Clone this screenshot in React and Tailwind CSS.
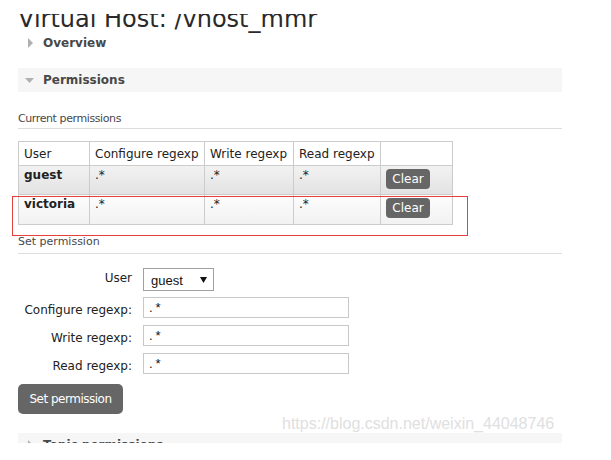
export default function App() {
  const rows = [
    { user: "guest", bg: "bg-gradient-to-b from-[#f2f2f2] to-[#e2e2e2]", h: "h-[29px]" },
    { user: "victoria", bg: "bg-gradient-to-b from-[#fdfdfd] to-[#f1f1f1]", h: "h-[30px]" },
  ];
  const fields = ["Configure regexp:", "Write regexp:", "Read regexp:"];
  return (
    <div className="relative w-[611px] h-[460px] overflow-hidden bg-white font-['DejaVu_Sans',Verdana,sans-serif] text-[#333]">
      <div className="px-[18px] w-[580px]">
        <div className="pt-[14px]">
          <div className="h-[20px] overflow-hidden">
            <h1 className="-mt-[9px] text-[24px] leading-[28px] font-normal text-[#2a2a2a] whitespace-nowrap">
              Virtual Host: /vhost_mmr
            </h1>
          </div>
        </div>

        <div className="-mt-[3px] flex items-center h-[24px]">
          <svg width="5" height="10" viewBox="0 0 5 10" className="ml-[10px]">
            <path d="M0 0 L5 5 L0 10 Z" fill="#b0b0b0" />
          </svg>
          <span className="ml-[10px] text-[12px] font-bold text-[#484848]">Overview</span>
        </div>

        <div className="mt-[13px] flex items-center h-[24px] bg-[#f6f6f6]">
          <svg width="9" height="5" viewBox="0 0 9 5" className="ml-[7px]">
            <path d="M0 0 L9 0 L4.5 5 Z" fill="#b0b0b0" />
          </svg>
          <span className="ml-[9px] text-[12px] font-bold text-[#484848]">Permissions</span>
        </div>

        <div className="mt-[19px] text-[11px] leading-[16px] pb-px border-b border-[#dddddd] text-[#484848] tracking-[-0.4px]">
          Current permissions
        </div>

        <table className="mt-[12px] border-collapse table-fixed w-[434px] text-[12px] text-[#222]">
          <colgroup>
            <col className="w-[71px]" />
            <col className="w-[115px]" />
            <col className="w-[89px]" />
            <col className="w-[87px]" />
            <col className="w-[72px]" />
          </colgroup>
          <thead>
            <tr className="h-[24px]">
              <th className="border border-[#cccccc] px-[5px] text-left font-normal">User</th>
              <th className="border border-[#cccccc] px-[5px] text-left font-normal whitespace-nowrap">Configure regexp</th>
              <th className="border border-[#cccccc] px-[5px] text-left font-normal whitespace-nowrap">Write regexp</th>
              <th className="border border-[#cccccc] px-[5px] text-left font-normal whitespace-nowrap">Read regexp</th>
              <th className="border border-[#cccccc]"></th>
            </tr>
          </thead>
          <tbody>
            {rows.map((r) => (
              <tr key={r.user} className={`${r.h} ${r.bg}`}>
                <td className="border border-[#cccccc] px-[5px] pt-[1px] align-top font-bold leading-[16px]">{r.user}</td>
                <td className="border border-[#cccccc] px-[5px] pt-[1px] align-top leading-[16px]">.*</td>
                <td className="border border-[#cccccc] px-[5px] pt-[1px] align-top leading-[16px]">.*</td>
                <td className="border border-[#cccccc] px-[5px] pt-[1px] align-top leading-[16px]">.*</td>
                <td className="border border-[#cccccc] pl-[5px] pt-[3px] align-top">
                  <div className="w-[44px] h-[20px] rounded-[4px] bg-[#666666] text-white text-[12px] leading-[20px] text-center">
                    Clear
                  </div>
                </td>
              </tr>
            ))}
          </tbody>
        </table>

        <div className="mt-[9px] text-[11px] leading-[16px] pb-[3px] border-b border-[#dddddd] text-[#484848]">
          Set permission
        </div>

        <div className="mt-[14px] flex flex-col text-[12px] leading-[14px] text-[#222]">
          <div className="flex items-center">
            <span className="w-[114px] text-right mb-[4px]">User</span>
            <div className="ml-[11px] w-[71px] h-[23px] border border-[#a0a0a0] flex items-center font-['Liberation_Sans',Arial,sans-serif] text-[13px] text-[#111]">
              <span className="ml-[7px] mt-[2px]">guest</span>
              <svg width="7" height="6" viewBox="0 0 7 6" className="ml-auto mr-[6px]">
                <path d="M0 0 L7 0 L3.5 6 Z" fill="#111" />
              </svg>
            </div>
          </div>
          {fields.map((f, i) => (
            <div key={f} className={`flex items-center ${i === 0 ? "mt-[6px]" : "mt-[7px]"}`}>
              <span className="w-[114px] text-right mt-[4px] whitespace-nowrap">{f}</span>
              <div className="ml-[11px] w-[206px] h-[21px] border border-[#c8c8c8] flex items-center font-['Liberation_Sans',Arial,sans-serif] text-[13px] text-[#111]">
                <span className="ml-[5px] tracking-[3px]">.*</span>
              </div>
            </div>
          ))}
        </div>

        <div className="mt-[10px] w-[105px] h-[30px] rounded-[5px] bg-[#666666] text-white text-[12px] tracking-[-0.5px] flex items-center justify-center">
          Set permission
        </div>

        <div className="mt-[19px] h-[10px] overflow-hidden">
          <div className="h-[24px] bg-[#f6f6f6] flex items-center">
            <svg width="5" height="10" viewBox="0 0 5 10" className="ml-[10px]">
              <path d="M0 0 L5 5 L0 10 Z" fill="#b0b0b0" />
            </svg>
            <span className="ml-[10px] text-[12px] font-bold text-[#484848]">Topic permissions</span>
          </div>
        </div>
      </div>

      <div className="absolute left-[12px] top-[196px] w-[456px] h-[40px] border border-[#e8403a]"></div>
      <div className="absolute left-[282px] top-[414px] font-['Liberation_Sans',Arial,sans-serif] text-[16px] leading-[20px] text-[#e0e0e0] whitespace-nowrap">
        https://blog.csdn.net/weixin_44048746
      </div>
    </div>
  );
}
